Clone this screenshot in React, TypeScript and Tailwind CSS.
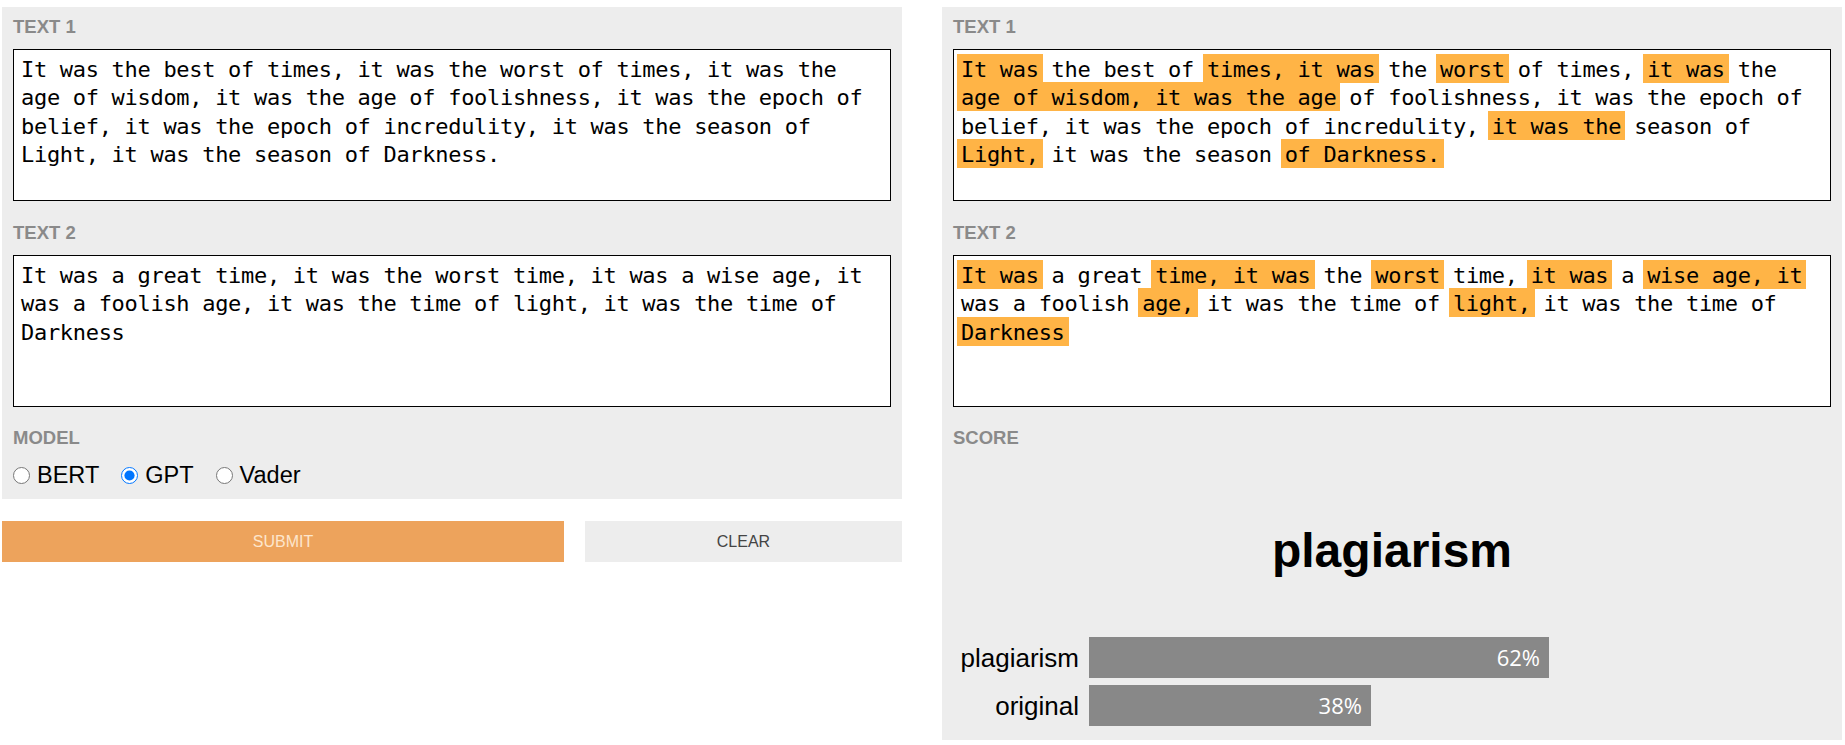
const TEXT_1 =
  'It was the best of times, it was the worst of times, it was the age of wisdom, it was the age of foolishness, it was the epoch of belief, it was the epoch of incredulity, it was the season of Light, it was the season of Darkness.';
const TEXT_2 =
  'It was a great time, it was the worst time, it was a wise age, it was a foolish age, it was the time of light, it was the time of Darkness';

type Segment = [string, boolean];

// plain runs are cut where the lines wrap so each run stays on one line
const MARKED_1: Segment[] = [
  ['It was', true],
  [' the best of ', false],
  ['times, it was', true],
  [' the ', false],
  ['worst', true],
  [' of times, ', false],
  ['it was', true],
  [' the ', false],
  ['age of wisdom, it was the age', true],
  [' of foolishness, it was the epoch of ', false],
  ['belief, it was the epoch of incredulity, ', false],
  ['it was the', true],
  [' season of ', false],
  ['Light,', true],
  [' it was the season ', false],
  ['of Darkness.', true],
];

const MARKED_2: Segment[] = [
  ['It was', true],
  [' a great ', false],
  ['time, it was', true],
  [' the ', false],
  ['worst', true],
  [' time, ', false],
  ['it was', true],
  [' a ', false],
  ['wise age, it', true],
  [' ', false],
  ['was a foolish ', false],
  ['age,', true],
  [' it was the time of ', false],
  ['light,', true],
  [' it was the time of ', false],
  ['Darkness', true],
];

const SCORES = [
  { label: 'plagiarism', value: 62 },
  { label: 'original', value: 38 },
];

const boxText =
  "font-['DejaVu_Sans_Mono',monospace] text-[22px] leading-[28.3px] tracking-[-0.3px] text-black";

function Label({ children, className = '' }: { children: string; className?: string }) {
  return (
    <div
      className={`font-['Liberation_Sans',Arial,sans-serif] font-bold text-[18.5px] leading-[20px] text-[#8a8a8a] uppercase ${className}`}
    >
      {children}
    </div>
  );
}

function InputBox({ value }: { value: string }) {
  return (
    <textarea
      readOnly
      value={value}
      className={`block w-full h-[152px] border border-black bg-white pt-[6px] px-[7px] resize-none outline-none ${boxText}`}
    />
  );
}

function MarkedBox({ segments }: { segments: Segment[] }) {
  return (
    <div className={`w-full h-[152px] border border-black bg-white pt-[6px] px-[7px] ${boxText}`}>
      {segments.map(([text, hit], i) =>
        hit ? (
          // shadows paint the highlight past the glyphs without moving the text
          <span
            key={i}
            className="bg-[#ffb446] shadow-[0_-1px_0_2px_#ffb446,2px_-1px_0_2px_#ffb446,-2px_-1px_0_2px_#ffb446]"
          >
            {text}
          </span>
        ) : (
          <span key={i}>{text}</span>
        )
      )}
    </div>
  );
}

function Radio({ label, checked = false }: { label: string; checked?: boolean }) {
  return (
    <label className="flex items-center gap-[7px]">
      <input type="radio" name="model" defaultChecked={checked} className="m-0 w-[17px] h-[17px]" />
      <span>{label}</span>
    </label>
  );
}

export default function App() {
  return (
    <div className="flex items-start gap-[40px] px-[2px] pt-[7px] bg-white min-h-screen font-['Liberation_Sans',Arial,sans-serif]">
      {/* inputs */}
      <div className="w-[900px] shrink-0">
        <div className="bg-[#ededed] px-[11px] pt-[10px] pb-[11px]">
          <Label>Text 1</Label>
          <div className="mt-[12px]">
            <InputBox value={TEXT_1} />
          </div>
          <Label className="mt-[22px]">Text 2</Label>
          <div className="mt-[12px]">
            <InputBox value={TEXT_2} />
          </div>
          <Label className="mt-[21px]">Model</Label>
          <div className="mt-[14px] flex items-center gap-[22px] text-[23.5px] leading-[26px] text-black">
            <Radio label="BERT" />
            <Radio label="GPT" checked />
            <Radio label="Vader" />
          </div>
        </div>
        <div className="mt-[22px] flex gap-[21px]">
          <button className="w-[562px] h-[41px] bg-[#eda35c] text-[16px] text-[#fde6cc] uppercase">
            Submit
          </button>
          <button className="flex-1 h-[41px] bg-[#ededed] text-[16px] text-[#444] uppercase">
            Clear
          </button>
        </div>
      </div>

      {/* result */}
      <div className="w-[900px] shrink-0 h-[733px] bg-[#ededed] px-[11px] pt-[10px] pb-[14px] flex flex-col">
        <Label>Text 1</Label>
        <div className="mt-[12px]">
          <MarkedBox segments={MARKED_1} />
        </div>
        <Label className="mt-[22px]">Text 2</Label>
        <div className="mt-[12px]">
          <MarkedBox segments={MARKED_2} />
        </div>
        <Label className="mt-[21px]">Score</Label>
        <div className="mt-[75px] text-center font-bold text-[48px] leading-[56px] text-black">
          plagiarism
        </div>
        <div className="mt-[58px] flex flex-col gap-[7px]">
          {SCORES.map((s) => (
            <div key={s.label} className="flex items-center gap-[10px] h-[41px]">
              <div className="w-[126px] text-right text-[26px] leading-[30px] text-black">
                {s.label}
              </div>
              <div className="flex-1 h-full">
                <div
                  className="h-full bg-[#888888] flex items-center justify-end pr-[9px] font-['Open_Sans',sans-serif] text-[22px] text-white"
                  style={{ width: `${s.value}%` }}
                >
                  {s.value}%
                </div>
              </div>
            </div>
          ))}
        </div>
      </div>
    </div>
  );
}
